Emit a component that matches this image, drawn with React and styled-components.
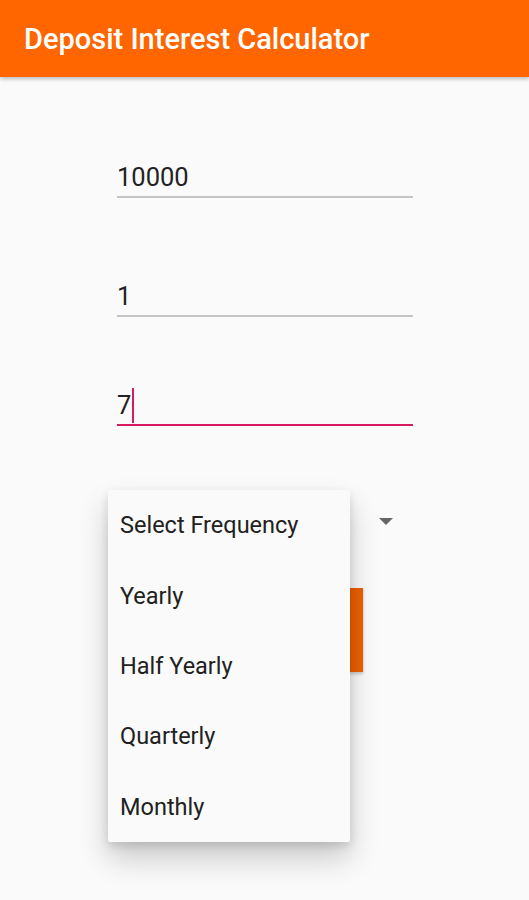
import React from 'react';
import styled, { createGlobalStyle } from 'styled-components';

const GlobalStyle = createGlobalStyle`
  body {
    margin: 0;
    background: #fafafa;
    font-family: Roboto, "Noto Sans", sans-serif;
  }
`;

const Screen = styled.div`
  position: relative;
  width: 529px;
  height: 900px;
  background: #fafafa;
  overflow: hidden;
`;

const AppBar = styled.header`
  height: 77px;
  background: #ff6600;
  display: flex;
  align-items: center;
  padding-left: 24px;
  box-shadow: 0 2px 4px rgba(0, 0, 0, 0.25);
  position: relative;
  z-index: 1;
`;

const Title = styled.h1`
  margin: 0;
  color: #fff;
  font-size: 29px;
  font-weight: 500;
`;

const Form = styled.div`
  display: flex;
  flex-direction: column;
  margin-left: 117px;
  width: 296px;
`;

const Field = styled.div`
  margin-top: ${(p) => p.$gap}px;
  padding-bottom: 4px;
  border-bottom: 2px solid ${(p) => (p.$focused ? '#d81b60' : '#c4c4c4')};
  display: flex;
  align-items: center;
  height: 30px;
`;

const Value = styled.span`
  font-size: 25.5px;
  line-height: 30px;
  color: #222;
`;

const Caret = styled.span`
  width: 2px;
  height: 35px;
  margin-left: 1px;
  background: #d81b60;
`;

const SpinnerRow = styled.div`
  margin-top: 70px;
  height: 50px;
  display: flex;
  align-items: center;
  justify-content: flex-end;
  padding-right: 20px;
`;

const Arrow = styled.span`
  width: 0;
  height: 0;
  border-left: 7px solid transparent;
  border-right: 7px solid transparent;
  border-top: 7px solid #666;
`;

const CalcButton = styled.button`
  margin-top: 42px;
  width: 246px;
  height: 84px;
  border: none;
  background: #ee6002;
  color: #fff;
  box-shadow: 0 2px 3px rgba(0, 0, 0, 0.2);
`;

const Popup = styled.ul`
  position: absolute;
  left: 108px;
  top: 490px;
  width: 242px;
  margin: 0;
  padding: 0;
  list-style: none;
  background: #fafafa;
  border-radius: 2px;
  box-shadow: 0 16px 30px rgba(0, 0, 0, 0.2), 0 4px 10px rgba(0, 0, 0, 0.12);
`;

const Option = styled.li`
  height: 70.4px;
  display: flex;
  align-items: center;
  padding-left: 12px;
  font-size: 23.5px;
  color: #212121;
`;

const options = ['Select Frequency', 'Yearly', 'Half Yearly', 'Quarterly', 'Monthly'];

export default function App() {
  return (
    <Screen>
      <GlobalStyle />
      <AppBar>
        <Title>Deposit Interest Calculator</Title>
      </AppBar>
      <Form>
        <Field $gap={85}>
          <Value>10000</Value>
        </Field>
        <Field $gap={83}>
          <Value>1</Value>
        </Field>
        <Field $gap={73} $focused>
          <Value>7</Value>
          <Caret />
        </Field>
        <SpinnerRow>
          <Arrow />
        </SpinnerRow>
        <CalcButton>CALCULATE</CalcButton>
      </Form>
      <Popup>
        {options.map((o) => (
          <Option key={o}>{o}</Option>
        ))}
      </Popup>
    </Screen>
  );
}
